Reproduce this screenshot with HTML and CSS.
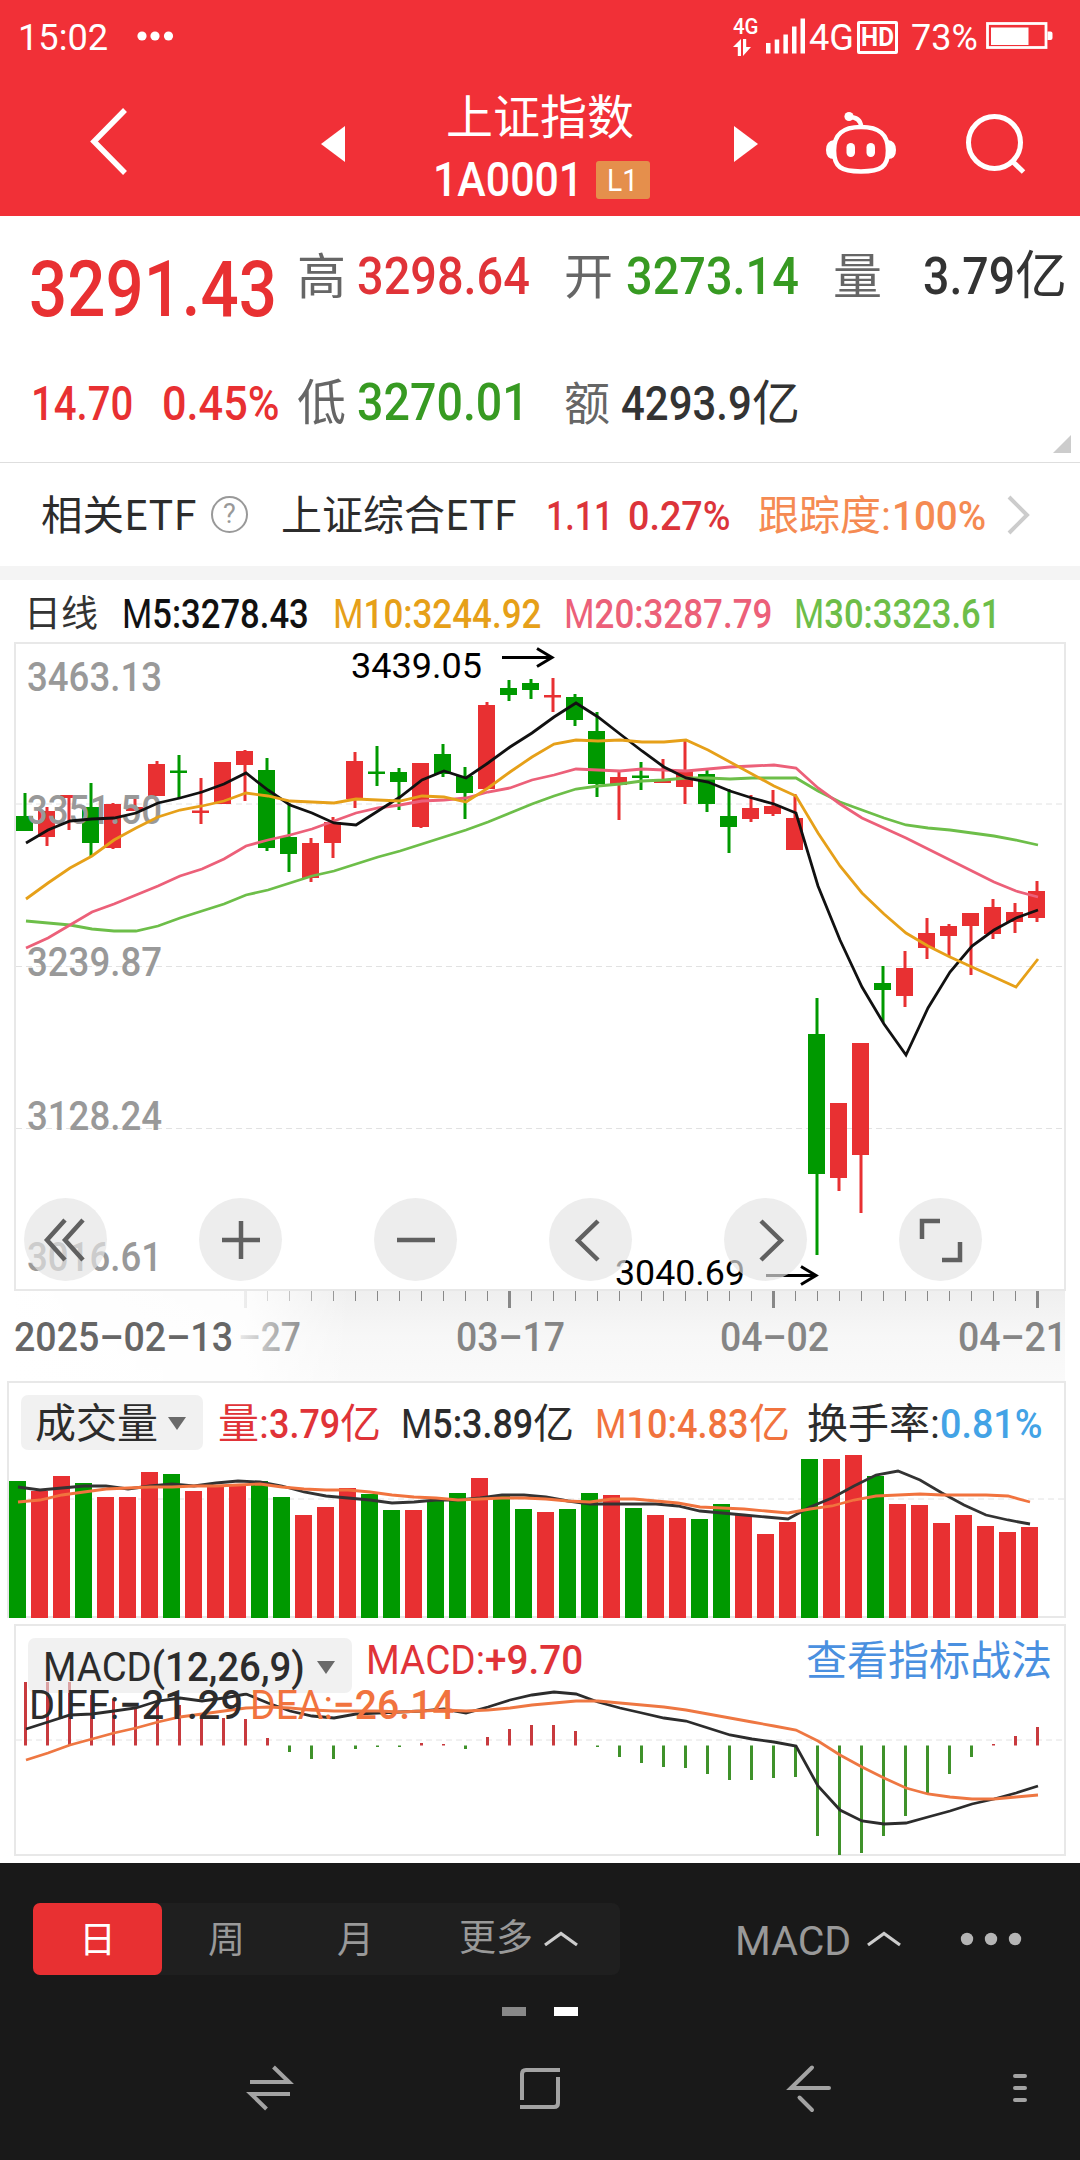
FILE: index.html
```html
<!DOCTYPE html>
<html lang="zh-CN">
<head>
    <meta charset="UTF-8">
    <meta name="viewport" content="width=device-width, initial-scale=1.0">
    <title>上证指数 1A0001</title>
    <link rel="stylesheet" href="styles.css">
</head>
<body>
    <header class="top">
        <div class="status">
            <span class="clock" data-w="90">15:02</span>
            <svg class="dots" width="40" height="12" viewBox="0 0 40 12" fill="#fff">
                <circle cx="7" cy="6" r="4.6"/><circle cx="20" cy="6" r="4.6"/><circle cx="33.5" cy="6" r="4.6"/>
            </svg>
            <div class="net">
                <span class="net-type" data-w="26">4G</span>
                <svg width="18" height="17" viewBox="0 0 18 17" fill="#fff">
                    <path d="M8 0v17H4.800V8H0zM10 17V0h3.200v8H18z"/>
                </svg>
            </div>
            <svg class="signal" width="40" height="36" viewBox="0 0 40 36" fill="#fff">
                <path d="M0 25h4.500v10.500H0zM8.700 21.500h4.500v14H8.700zM17.400 16.500h4.500v19h-4.500zM26 8.500h4.500v27H26zM34.500 .5H39v35h-4.500z"/>
            </svg>
            <span class="carrier" data-w="45">4G</span>
            <span class="hd"><b data-w="33">HD</b></span>
            <span class="percent" data-w="67">73%</span>
            <svg class="battery" width="68" height="28" viewBox="0 0 68 28">
                <rect x="1.500" y="1.500" width="58.500" height="24" fill="none" stroke="#fff" stroke-width="2.800"/>
                <path d="M5 5.500h37.500v17.500H5zM61.500 9.500h3q2 0 2 2v4.500q0 2-2 2h-3z" fill="#fff"/>
            </svg>
        </div>
        <div class="title-bar">
            <svg class="back" width="44" height="70" viewBox="0 0 44 70" fill="none" stroke="#fff" stroke-width="5.500">
                <path d="M37 4 6 35.500 37 67"/>
            </svg>
            <svg class="prev" width="24" height="36" viewBox="0 0 24 36" fill="#fff"><path d="M24 0v36L0 18z"/></svg>
            <div class="title">
                <h1>上证指数</h1>
                <div class="code"><span data-w="150">1A0001</span><em><i data-w="31">L1</i></em></div>
            </div>
            <svg class="next" width="24" height="36" viewBox="0 0 24 36" fill="#fff"><path d="M0 0v36l24-18z"/></svg>
            <svg class="robot" width="72" height="66" viewBox="0 0 72 66" fill="none" stroke="#fff" stroke-width="4.600">
                <path d="M36 17c18 0 27 7 27 23.500S56 61.500 36 61.500 9 57 9 40.500 18 17 36 17z"/>
                <path d="M24 7c7 0 12 3 12 10"/>
                <circle cx="24" cy="6.500" r="4.600" fill="#fff" stroke="none"/>
                <path d="M9 30q-8 1-8 10t8 9zM63 30q8 1 8 10t-8 9z" fill="#fff" stroke="none"/>
                <rect x="21.500" y="33" width="8.500" height="14" rx="4.200" fill="#fff" stroke="none"/>
                <rect x="41.500" y="33" width="8.500" height="14" rx="4.200" fill="#fff" stroke="none"/>
            </svg>
            <svg class="search" width="62" height="62" viewBox="0 0 62 62" fill="none" stroke="#fff" stroke-width="5">
                <circle cx="30.500" cy="30.500" r="26"/><path d="M48 49 59.500 60"/>
            </svg>
        </div>
    </header>

    <section class="quote">
        <div class="price">
            <div class="last" data-w="248">3291.43</div>
            <div class="change"><span data-w="102">14.70</span><span data-w="118">0.45%</span></div>
        </div>
        <div class="stats">
            <span class="lab">高</span><span class="num red" data-w="173">3298.64</span>
            <span class="lab">开</span><span class="num green" data-w="173">3273.14</span>
            <span class="lab">量</span><span class="num"><span data-w="92">3.79</span>亿</span>
        </div>
        <div class="stats second">
            <span class="lab">低</span><span class="num green" data-w="172">3270.01</span>
            <span class="lab small">额</span><span class="num small"><span data-w="131">4293.9</span>亿</span>
        </div>
        <svg class="corner" width="18" height="18" viewBox="0 0 18 18"><path d="M18 0v18H0z" fill="#ccc"/></svg>
    </section>

    <section class="etf">
        <span class="etf-label" data-w="155">相关ETF</span>
        <span class="help"><i>?</i></span>
        <span class="etf-name" data-w="235">上证综合ETF</span>
        <b class="etf-price" data-w="67">1.11</b>
        <b class="etf-pct" data-w="103">0.27%</b>
        <span class="track">跟踪度:<b data-w="94">100%</b></span>
        <svg width="24" height="40" viewBox="0 0 24 40" fill="none" stroke="#ccc" stroke-width="4"><path d="M2 2 20 20 2 38"/></svg>
    </section>

    <section class="legend">
        <span class="period" data-w="74">日线</span>
        <b class="m5" data-w="187"><span>M</span>5:3278.43</b>
        <b class="m10" data-w="208"><span>M</span>10:3244.92</b>
        <b class="m20" data-w="208"><span>M</span>20:3287.79</b>
        <b class="m30" data-w="206"><span>M</span>30:3323.61</b>
    </section>

    <section class="kline">
        <svg class="plot" width="1080" height="739" viewBox="0 642 1080 739">
            <defs>
                <linearGradient id="fade" x1="0" y1="0" x2="0" y2="1">
                    <stop offset="0" stop-color="#efefef"/><stop offset=".5" stop-color="#f7f7f7"/><stop offset="1" stop-color="#fafafa"/>
                </linearGradient>
                <linearGradient id="left" x1="0" y1="0" x2="1" y2="0">
                    <stop offset="0" stop-color="#fff"/><stop offset=".7" stop-color="#fff" stop-opacity=".85"/><stop offset="1" stop-color="#fff" stop-opacity="0"/>
                </linearGradient>
                <linearGradient id="label" gradientUnits="userSpaceOnUse" x1="236" y1="0" x2="302" y2="0">
                    <stop offset="0" stop-color="#eee"/><stop offset=".5" stop-color="#bbb"/><stop offset="1" stop-color="#909090"/>
                </linearGradient>
            </defs>
            <rect x="15" y="1291" width="1050" height="90" fill="url(#fade)"/>
            <rect class="frame" x="15" y="643" width="1050" height="647"/>
            <path class="grid" d="M16 804H1065M16 966.500H1065M16 1128.500H1065"/>
            <g id="candles"></g>
            <g id="ticks"></g>
            <rect x="0" y="1291" width="350" height="90" fill="url(#left)"/>
            <g class="axis">
                <text x="27" y="691" textLength="135">3463.13</text>
                <text x="27" y="824" textLength="135">3351.50</text>
                <text x="27" y="976" textLength="135">3239.87</text>
                <text x="27" y="1130" textLength="135">3128.24</text>
                <text x="27" y="1271" textLength="135">3016.61</text>
            </g>
            <g id="averages"></g>
            <g class="mark">
                <text x="351" y="678" textLength="131">3439.05</text>
                <path d="M502 657.500H552M537 648.500 552 657.500 537 666.500"/>
                <text x="615" y="1284.500" textLength="130">3040.69</text>
                <path d="M766 1275.500H816M801 1266.500 816 1275.500 801 1284.500"/>
            </g>
            <g class="dates">
                <text x="14" y="1351" textLength="219" fill="#666">2025–02–13</text>
                <text x="238" y="1351" textLength="63" fill="url(#label)">–27</text>
                <text x="456" y="1351" textLength="109">03–17</text>
                <text x="720" y="1351" textLength="109">04–02</text>
                <text x="958" y="1351" textLength="109">04–21</text>
            </g>
        </svg>
        <div class="tools">
            <button><svg width="60" height="60" viewBox="0 0 60 60"><path d="M29 10 11 30l18 20M47 10 29 30l18 20"/></svg></button>
            <button><svg width="60" height="60" viewBox="0 0 60 60"><path d="M11 30H49M30 11V49"/></svg></button>
            <button><svg width="60" height="60" viewBox="0 0 60 60"><path d="M11 30H49"/></svg></button>
            <button><svg width="60" height="60" viewBox="0 0 60 60"><path d="M37 11 17 30.500 37 50"/></svg></button>
            <button><svg width="60" height="60" viewBox="0 0 60 60"><path d="M25 11 45 30.500 25 50"/></svg></button>
            <button><svg width="60" height="60" viewBox="0 0 60 60"><path d="M29 11H11V29M49 32V50H31"/></svg></button>
        </div>
    </section>

    <section class="volume">
        <svg class="plot" width="1080" height="238" viewBox="0 1381 1080 238">
            <rect class="frame" x="8" y="1382" width="1057" height="235"/>
            <path class="grid" d="M8 1499H1065"/>
            <g id="volume"></g>
        </svg>
        <div class="head">
            <span class="picker"><span data-w="123">成交量</span><i></i></span>
            <span class="v0 red">量:<b data-w="71">3.79</b>亿</span>
            <span class="v1"><b data-w="132"><span>M</span>5:3.89</b>亿</span>
            <span class="v2 orange"><b data-w="154"><span>M</span>10:4.83</b>亿</span>
            <span class="v3">换手率:<b class="blue" data-w="103">0.81%</b></span>
        </div>
    </section>

    <section class="macd">
        <svg class="plot" width="1080" height="232" viewBox="0 1624 1080 232">
            <rect class="frame" x="15" y="1625" width="1050" height="230"/>
            <path class="grid" d="M16 1740H1065"/>
            <g id="macd"></g>
        </svg>
        <div class="head">
            <span class="picker"><b data-w="262"><span>MACD</span>(12,26,9)</b><i></i></span>
            <b class="value red" data-w="217"><span>MACD:</span>+9.70</b>
            <a class="blue-link">查看指标战法</a>
        </div>
        <div class="sub"><b data-w="214"><span>DIFF:</span>−21.29</b><b class="orange" data-w="205"><span>DEA:</span>−26.14</b></div>
    </section>

    <footer class="bottom">
        <div class="bar">
            <div class="tabs">
                <span class="tab active">日</span>
                <span class="tab">周</span>
                <span class="tab">月</span>
                <span class="more">更多<svg width="36" height="18" viewBox="0 0 36 18"><path d="M2 15 18 3.500 34 15"/></svg></span>
            </div>
            <span class="indicator"><span>MACD</span><svg width="36" height="18" viewBox="0 0 36 18"><path d="M2 15 18 3.500 34 15"/></svg></span>
            <svg width="62" height="14" viewBox="0 0 62 14" fill="#b5b5b5"><circle cx="7" cy="7" r="6.200"/><circle cx="31" cy="7" r="6.200"/><circle cx="55" cy="7" r="6.200"/></svg>
        </div>
        <div class="pager"><i></i><i class="on"></i></div>
        <svg class="nav" width="1080" height="60" viewBox="0 2058 1080 60" fill="none" stroke="#a3a3a3" stroke-width="4">
            <path d="M250 2082H289L273.500 2067M290 2094H251L266.500 2109"/>
            <path d="M522 2100V2074Q522 2070 526 2070H560M520 2107H554Q558 2107 558 2103V2077"/>
            <path d="M829 2088H791L812 2067.500M799.500 2097.500 812 2110" stroke-linecap="round"/>
            <path d="M1015 2076h10M1015 2088h10M1015 2100h10" stroke-linecap="round"/>
        </svg>
    </footer>

    <script src="script.js"></script>
</body>
</html>
```
FILE: styles.css
```css
* {
    box-sizing: border-box;
    margin: 0;
    padding: 0;
}

body {
    width: 1080px;
    height: 2160px;
    overflow: hidden;
    background: #fff;
    color: #2c2c2c;
    font-family: Roboto, "Noto Sans CJK SC", sans-serif;
    font-size: 41px;
    line-height: 60px;
    display: flex;
    flex-direction: column;
}

b {
    font-weight: 500;
}

/* letters are lighter than the figures */
b > span {
    font-weight: 400;
}

i, em {
    font-style: normal;
}

svg {
    display: block;
    flex: none;
}

/* widths of these are set from data-w in script.js */
[data-w] {
    display: inline-block;
    white-space: nowrap;
    transform-origin: 0 0;
    flex: none;
}

.red { color: #e03338; }
.green { color: #379a22; }
.orange { color: #f1733e; }
.blue { color: #43a3e6; }

/* header */
.top {
    height: 216px;
    background: #f13037;
    color: #fff;
}

.status {
    display: flex;
    align-items: center;
    height: 74px;
    padding-left: 18px;
}

.clock, .percent, .carrier {
    font-size: 37px;
}

.clock, .percent {
    margin-top: 1px;
}

.dots {
    margin: 0 0 2px 27px;
}

.net {
    width: 26px;
    margin-left: 558px;
    display: flex;
    flex-direction: column;
    gap: 2px;
    padding-bottom: 2px;
}

.net-type {
    font-size: 22px;
    line-height: 20px;
    font-weight: 500;
}

.signal {
    margin: 0 0 2px 7px;
}

.carrier {
    margin-left: 3px;
    margin-top: 2px;
}

.hd {
    width: 41px;
    height: 33px;
    margin-left: 3px;
    padding-left: 1px;
    border: 3px solid #fff;
    border-radius: 2px;
    font-size: 25px;
    line-height: 27px;
}

.hd b {
    font-weight: 700;
}

.percent {
    margin-left: 13px;
}

.battery {
    margin: 0 0 2px 8px;
}

.title-bar {
    display: flex;
    height: 142px;
}

.back { margin: 32px 0 0 88px; }
.prev { margin: 52px 0 0 189px; }
.next { margin: 52px 0 0 83px; }
.robot { margin: 36px 0 0 67px; }
.search { margin: 38px 0 0 67px; }

.title {
    width: 218px;
    margin-left: 88px;
}

.title h1 {
    font-size: 47px;
    font-weight: 400;
    line-height: 60px;
    margin: 14px 0 0 13px;
}

.code {
    display: flex;
    align-items: center;
    font-size: 48px;
    font-weight: 500;
    line-height: 60px;
    margin-top: 2px;
    white-space: nowrap;
}

.code em {
    width: 54px;
    height: 38px;
    margin-left: 13px;
    padding-left: 11px;
    border-radius: 3px;
    background: #e58f4c;
    font-size: 31px;
    font-weight: 400;
    line-height: 39px;
    flex: none;
}

/* quote */
.quote {
    position: relative;
    height: 247px;
    border-bottom: 1px solid #dedede;
    display: grid;
    grid-template-columns: 297px 1fr;
    grid-template-rows: 125px 60px;
    padding-top: 31px;
}

.price {
    grid-row: span 2;
    padding-left: 29px;
    margin-top: -2px;
    color: #e83032;
    font-weight: 500;
}

.last {
    font-size: 77px;
    line-height: 90px;
}

.change {
    display: flex;
    gap: 29px;
    margin: 39px 0 0 2px;
    font-size: 48px;
}

.stats {
    display: grid;
    grid-template-columns: 60px 207px 62px 207px 90px auto;
    align-items: baseline;
    align-content: start;
    font-size: 52px;
    white-space: nowrap;
}

.stats.second {
    margin-top: 1px;
}

.stats .lab {
    font-size: 49px;
    color: #666;
}

.stats .num {
    font-weight: 500;
    display: inline-block;
    color: #333;
}

.stats .num.red { color: #e03338; }
.stats .num.green { color: #379a22; }

.stats .num:not([data-w]) {
    display: flex;
    font-size: 52px;
    font-weight: 400;
}

.stats .num span {
    font-weight: 500;
}

.stats .lab.small {
    font-size: 46px;
}

.stats .num.small:not([data-w]) {
    font-size: 48px;
    margin-left: -5px;
}

.corner {
    position: absolute;
    right: 9px;
    bottom: 9px;
}

/* related etf */
.etf {
    display: flex;
    align-items: center;
    height: 103px;
    padding-left: 41px;
    white-space: nowrap;
}

.etf-label, .etf-name {
    color: #2c2c2c;
    font-family: "Noto Sans CJK SC", sans-serif;
    margin-top: -5px;
}

.help {
    width: 37px;
    height: 37px;
    margin-left: 15px;
    border: 2px solid #999;
    border-radius: 50%;
    color: #999;
    font-size: 27px;
    line-height: 33px;
    text-align: center;
}

.etf-name { margin-left: 33px; }
.etf-price { margin: 2px 0 0 30px; color: #dc343a; }
.etf-pct { margin: 2px 0 0 15px; color: #dc343a; }

.track {
    margin: 2px 0 0 27px;
    display: flex;
    color: #f58a52;
}

.track b {
    margin-left: 1px;
}

.etf svg {
    margin-left: 21px;
}

/* moving averages */
.legend {
    display: flex;
    align-items: center;
    height: 76px;
    padding: 8px 0 0 24px;
    border-top: 14px solid #f4f4f4;
    font-size: 40px;
    color: #111;
}

.legend .period { color: #333; font-size: 37px; }
.m5 { margin-left: 24px; }
.m10 { margin-left: 24px; color: #e6a019; }
.m20 { margin-left: 23px; color: #ec6079; }
.m30 { margin-left: 22px; color: #6dbe49; }

/* charts */
.plot {
    position: absolute;
    left: 0;
    top: 0;
}

.frame {
    fill: none;
    stroke: #e8e8e8;
    stroke-width: 2;
}

.grid {
    stroke: #e2e2e2;
    stroke-width: 1;
    stroke-dasharray: 6 4;
}

.kline {
    position: relative;
    height: 739px;
    padding-top: 556px;
}

.axis, .dates {
    font-size: 41px;
    font-weight: 500;
    fill: #999;
}

.dates {
    fill: #858585;
}

.mark {
    font-size: 35px;
    fill: #000;
}

.mark path {
    fill: none;
    stroke: #000;
    stroke-width: 3;
}

.tools {
    position: relative;
    display: flex;
    gap: 92px;
    padding-left: 24px;
}

.tools button {
    width: 83px;
    height: 83px;
    border: none;
    border-radius: 50%;
    background: rgba(228, 228, 228, 0.68);
    display: flex;
    align-items: center;
    justify-content: center;
}

.tools path {
    fill: none;
    stroke: #606060;
    stroke-width: 4.5;
}

.head {
    position: relative;
    display: flex;
    height: 55px;
    line-height: 58px;
    white-space: nowrap;
}

.head > span {
    display: flex;
}

.picker {
    height: 55px;
    border-radius: 7px;
    background: rgba(232, 232, 232, 0.6);
    align-items: center;
    flex: none;
}

.picker i {
    border: 9px solid transparent;
    border-top: 13px solid #6a6a6a;
    border-bottom: 0;
}

.volume {
    position: relative;
    height: 243px;
    padding: 14px 0 0 21px;
}

.volume .picker {
    width: 182px;
    padding: 2px 0 0 14px;
    gap: 10px;
}

.v0 { margin-left: 15px; }
.v1 { margin-left: 20px; }
.v2 { margin-left: 21px; }
.v3 { margin-left: 17px; }

.macd {
    position: relative;
    height: 239px;
    padding: 14px 0 0 28px;
}

.macd .picker {
    width: 324px;
    padding: 3px 0 0 15px;
    gap: 12px;
}

.macd .value {
    margin: -7px 0 0 14px;
}

.blue-link {
    margin: -6px 0 0 223px;
    color: #4a90e0;
}

.sub {
    position: relative;
    display: flex;
    gap: 7px;
    margin-top: -18px;
    padding-left: 1px;
}

/* bottom */
.bottom {
    flex: 1;
    background: #191919;
    color: #999;
    font-size: 37px;
    padding-top: 40px;
}

.bar {
    display: flex;
    align-items: center;
    padding-left: 33px;
}

.tabs {
    display: flex;
    width: 587px;
    height: 72px;
    line-height: 76px;
    border-radius: 8px;
    background: #1f1f1f;
}

.tab {
    width: 129px;
    text-align: center;
}

.tab.active {
    background: #e83032;
    color: #fff;
    border-radius: 7px;
}

.more {
    display: flex;
    align-items: center;
    gap: 10px;
    margin-left: 39px;
}

.indicator {
    display: flex;
    align-items: center;
    gap: 15px;
    margin-left: 115px;
    width: 225px;
    font-size: 41px;
}

.indicator span {
    padding-top: 4px;
}

.bar path {
    fill: none;
    stroke: #ccc;
    stroke-width: 3.2;
}

.pager {
    display: flex;
    justify-content: center;
    gap: 28px;
    margin-top: 32px;
}

.pager i {
    width: 24px;
    height: 9px;
    background: #888;
}

.pager .on {
    background: #fff;
}

.nav {
    margin-top: 42px;
}
```
FILE: script.js
```js
const RED = '#e83032';
const GREEN = '#009900';
const STEP = 22;

// [up/down, high, body top, body bottom, low]
const candles = [
    ['g', 793, 816, 831, 831], ['r', 807, 811, 837, 846], ['r', 795, 795, 798, 830], ['g', 783, 807, 843, 856],
    ['r', 803, 804, 848, 849], ['r', 798, 807, 811, 811], ['r', 761, 764, 796, 796], ['g', 755, 770.5, 773, 799],
    ['r', 778, 810.5, 813, 824], ['r', 762, 762, 804, 804], ['r', 750, 751, 765, 801], ['g', 758, 770, 848, 851],
    ['g', 803, 837, 854, 872], ['r', 838, 843, 878, 882], ['r', 817, 822, 843, 858], ['r', 752, 761, 799, 808],
    ['g', 746, 771.5, 774, 786], ['g', 768, 772, 782, 810], ['r', 763, 763, 827, 828], ['g', 744, 754, 774, 777],
    ['g', 767, 776, 793, 819], ['r', 702, 705, 789, 789], ['g', 680, 688, 695, 701], ['g', 679, 683, 690, 699],
    ['r', 678, 695, 697.5, 712], ['g', 694, 697, 720, 726], ['g', 712, 731, 784, 797], ['r', 771, 777, 785, 820],
    ['g', 762, 775.5, 778, 790], ['r', 759, 780, 783, 783], ['r', 740, 770, 787, 804], ['g', 770, 774, 804, 812],
    ['g', 789, 816, 827, 853], ['r', 795, 808, 819, 822], ['r', 790, 806, 814, 816], ['r', 794, 818, 850, 850],
    ['g', 998, 1034, 1174, 1255], ['r', 1103, 1103, 1178, 1191], ['r', 1043, 1043, 1155, 1213], ['g', 966, 983, 990, 1022],
    ['r', 951, 968, 996, 1007], ['r', 918, 933, 948, 959], ['r', 924, 926, 936, 956], ['r', 913, 913, 926, 975],
    ['r', 899, 907, 934, 939], ['r', 903, 912, 922, 933], ['r', 881, 891, 918, 922]
];

const averages = {
    '#6dbe49': [921, 923, 925, 929, 931, 931, 926, 918, 911, 904, 895, 890, 883, 876, 871, 864, 857, 851, 844, 837, 830, 822, 813, 804, 796, 789, 786, 784, 781, 780, 778, 778, 779, 778, 778, 778, 791, 802, 810, 818, 825, 828, 830, 833, 836, 840, 845],
    '#ec6079': [948, 938, 925, 912, 904, 895, 886, 876, 869, 859, 846, 840, 835, 829, 821, 813, 808, 805, 801, 800, 798, 792, 788, 780, 775, 769, 770, 771, 769, 770, 771, 769, 767, 766, 765, 768, 788, 804, 818, 828, 838, 849, 860, 871, 882, 891, 897],
    '#111': [843, 830, 821, 819, 818, 813, 803, 798, 792, 784, 773, 790, 805, 813, 823, 825, 811, 797, 780, 771, 778, 763, 747, 733, 717, 703, 717, 734, 751, 767, 778, 782, 791, 798, 804, 813, 886, 940, 987, 1024, 1055, 1008, 972, 946, 930, 918, 910],
    '#e6a019': [899, 883, 868, 856, 840, 828, 817, 810, 806, 801, 793, 796, 801, 802, 803, 799, 800, 801, 796, 797, 802, 788, 772, 757, 744, 740, 741, 740, 742, 742, 740, 750, 762, 774, 786, 796, 833, 866, 893, 914, 933, 946, 957, 967, 977, 987, 959]
};

const volumes = [1481, 1491, 1476, 1483, 1497, 1497, 1472, 1474, 1491, 1486, 1485, 1481, 1497, 1515, 1507, 1488, 1494, 1510, 1510, 1501, 1493, 1478, 1496, 1509, 1512, 1509, 1493, 1495, 1508, 1515, 1518, 1519, 1504, 1515, 1534, 1522, 1459, 1459, 1455, 1476, 1504, 1505, 1523, 1515, 1526, 1532, 1527];
const volumeSides = 'grrgrrrgrrrggrrrggrggrggrggrgrrggrrrgrrgrrrrrrr';
const volumeLines = {
    '#333': [1487, 1490, 1488, 1486, 1486, 1489, 1486, 1484, 1486, 1483, 1481, 1482, 1486, 1492, 1496, 1498, 1500, 1503, 1502, 1500, 1500, 1498, 1495, 1495, 1497, 1501, 1504, 1504, 1504, 1504, 1506, 1511, 1513, 1515, 1517, 1519, 1507, 1498, 1486, 1475, 1471, 1480, 1493, 1505, 1515, 1520, 1524],
    '#f1733e': [1502, 1500, 1495, 1492, 1489, 1488, 1487, 1487, 1486, 1486, 1485, 1484, 1487, 1489, 1490, 1490, 1492, 1495, 1497, 1498, 1500, 1499, 1498, 1498, 1499, 1501, 1502, 1499, 1499, 1501, 1503, 1507, 1508, 1509, 1511, 1513, 1509, 1506, 1500, 1496, 1495, 1494, 1495, 1495, 1495, 1496, 1502]
};

const histogram = [1682, 1682, 1682, 1695, 1699, 1708, 1703, 1705, 1717, 1718, 1719, 1738, 1752, 1759, 1759, 1749, 1747, 1747, 1743, 1744, 1749, 1737, 1729, 1725, 1725, 1731, 1747, 1757, 1763, 1767, 1768, 1774, 1780, 1780, 1778, 1777, 1836, 1855, 1853, 1836, 1816, 1793, 1774, 1757, 1744, 1736, 1727];
const macdLines = {
    '#2c2c2c': [1729, 1722, 1715, 1714, 1711, 1708, 1701, 1698, 1701, 1698, 1694, 1703, 1711, 1716, 1718, 1714, 1713, 1712, 1711, 1709, 1713, 1707, 1700, 1695, 1692, 1694, 1702, 1708, 1713, 1718, 1721, 1728, 1735, 1739, 1742, 1746, 1786, 1810, 1821, 1824, 1823, 1817, 1811, 1804, 1799, 1793, 1786],
    '#ee7742': [1760, 1753, 1745, 1739, 1733, 1728, 1722, 1717, 1714, 1711, 1708, 1707, 1708, 1710, 1711, 1711, 1711, 1712, 1711, 1710, 1711, 1710, 1708, 1705, 1703, 1701, 1701, 1703, 1705, 1707, 1710, 1714, 1718, 1722, 1726, 1730, 1741, 1755, 1767, 1778, 1788, 1794, 1797, 1799, 1799, 1797, 1795]
};

function rect(x, y, w, h, fill) {
    return `<rect x="${x}" y="${y}" width="${w}" height="${h}" fill="${fill}"/>`;
}

function lines(set, x0) {
    return Object.entries(set).map(([color, ys]) => {
        const points = ys.map((y, i) => `${x0 + i * STEP},${y}`).join(' ');
        return `<polyline points="${points}" fill="none" stroke="${color}" stroke-width="2.8"/>`;
    }).join('');
}

function put(id, html) {
    document.getElementById(id).innerHTML = html;
}

put('candles', candles.map(([side, high, top, bottom, low], i) => {
    const x = 25 + i * STEP;
    const color = side === 'r' ? RED : GREEN;
    return rect(x - 1.5, high, 3, low - high, color) + rect(x - 9, top, 17, bottom - top, color);
}).join(''));
put('averages', lines(averages, 26));

let ticks = '';
for (let i = 10; i <= 46; i++) {
    const x = 25.5 + i * STEP;
    const major = (i - 10) % 12 === 0;
    ticks += major ? rect(x - 1.5, 1291, 3, 17, '#888') : rect(x - 0.5, 1291, 1, 10, '#888');
}
put('ticks', ticks);

put('volume', volumes.map((y, i) =>
    rect(9 + i * STEP, y, 17, 1618 - y, volumeSides[i] === 'r' ? RED : GREEN)
).join('') + lines(volumeLines, 18));

put('macd', histogram.map((y, i) => {
    const zero = 1745.5;
    return y < zero
        ? rect(24 + i * STEP, y, 3, zero - y, '#c83a3e')
        : rect(24 + i * STEP, zero, 3, y - zero, '#3f922a');
}).join('') + lines(macdLines, 26));

// squeeze each text to its column width
document.querySelectorAll('[data-w]').forEach(el => {
    const width = Number(el.dataset.w);
    el.style.width = 'max-content';
    const full = el.offsetWidth;
    el.style.width = width + 'px';
    el.style.transform = `scaleX(${width / full})`;
});

document.querySelectorAll('text[textLength]').forEach(el => {
    el.setAttribute('lengthAdjust', 'spacingAndGlyphs');
});
```
